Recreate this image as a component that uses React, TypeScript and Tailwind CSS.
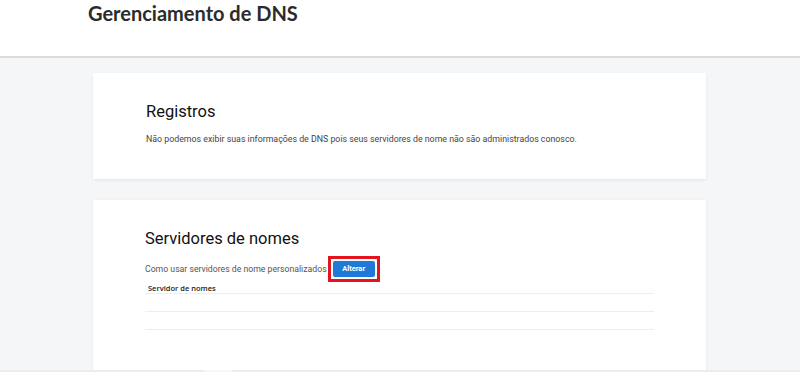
export default function App() {
  return (
    <div className="relative h-[372px] w-[800px] overflow-hidden bg-[#f5f6f7] font-['Roboto',sans-serif]">
      {/* Page header */}
      <header className="h-[58px] border-b-2 border-[#dcdcdc] bg-white pl-[88px]">
        <h1 className="pt-[1px] font-['Lato',sans-serif] text-[20px] font-bold leading-[24px] text-[#2b2b2b]">
          Gerenciamento de DNS
        </h1>
      </header>

      <div className="flex flex-col gap-[21px] pl-[93px] pt-[15px]">
        {/* Registros */}
        <section className="h-[106px] w-[613px] bg-white pl-[53px] pt-[28px] shadow-[0_1px_3px_rgba(0,0,0,0.08)]">
          <h2 className="text-[16.5px] leading-[21px] text-[#111]">Registros</h2>
          <p className="mt-[10px] text-[8.8px] leading-[14px] text-[#444]">
            Não podemos exibir suas informações de DNS pois seus servidores de nome não são administrados conosco.
          </p>
        </section>

        {/* Servidores de nomes */}
        <section className="h-[200px] w-[613px] bg-white pl-[52px] pt-[29px] shadow-[0_1px_3px_rgba(0,0,0,0.08)]">
          <h2 className="text-[16.5px] leading-[20px] text-[#111]">Servidores de nomes</h2>
          <div className="mt-[7px] flex items-center">
            <span className="text-[8.7px] leading-[14px] text-[#555]">Como usar servidores de nome personalizados</span>
            <div className="ml-[1px] border-[3px] border-[#e3141d] p-[2px]">
              <button className="block h-[16px] w-[42px] rounded-[2px] bg-[#1f79d6] text-[7.5px] font-bold leading-[16px] text-white">
                Alterar
              </button>
            </div>
          </div>
          <div className="w-[509px]">
            <div className="h-[12px] border-b border-[#eeeeee] pl-[3px] pt-[1px] font-['Open_Sans',sans-serif] text-[7.5px] font-semibold leading-[10px] text-[#222]">
              Servidor de nomes
            </div>
            <div className="h-[18px] border-b border-[#eeeeee]" />
            <div className="h-[18px] border-b border-[#eeeeee]" />
          </div>
        </section>
      </div>

      {/* bottom scroll strip */}
      <div className="absolute bottom-0 left-0 flex h-[2px] w-full bg-[#ececec]">
        <div className="ml-[204px] h-full w-[28px] bg-[#f7f7f7]" />
      </div>
    </div>
  );
}
